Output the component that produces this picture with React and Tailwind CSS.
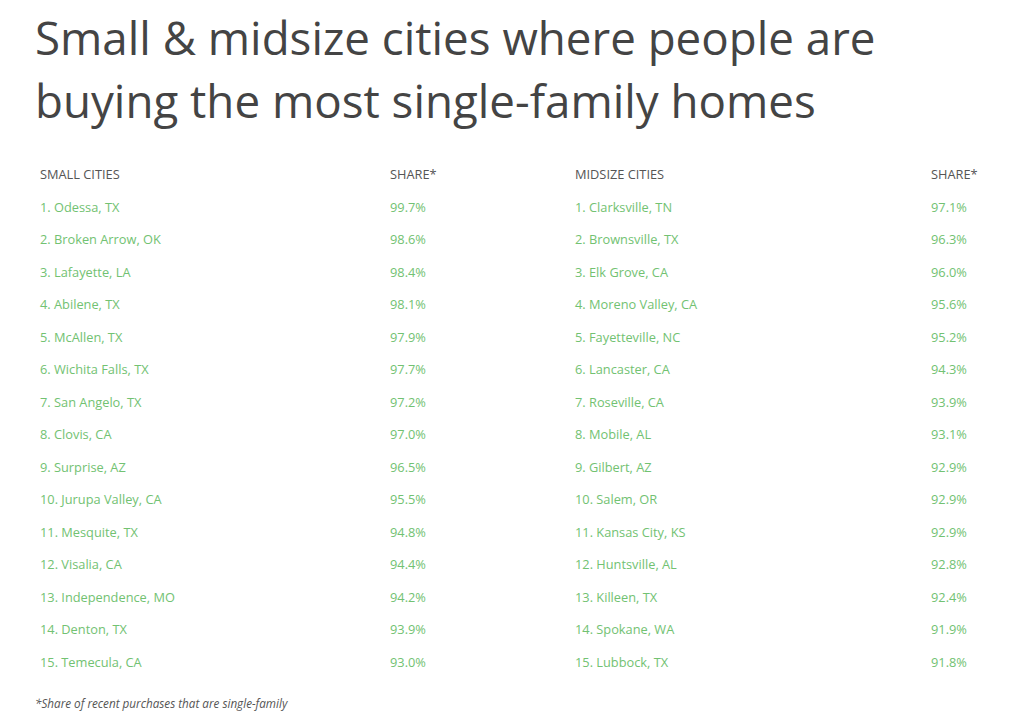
import React from 'react';

const small = [
  ['1. Odessa, TX', '99.7%'],
  ['2. Broken Arrow, OK', '98.6%'],
  ['3. Lafayette, LA', '98.4%'],
  ['4. Abilene, TX', '98.1%'],
  ['5. McAllen, TX', '97.9%'],
  ['6. Wichita Falls, TX', '97.7%'],
  ['7. San Angelo, TX', '97.2%'],
  ['8. Clovis, CA', '97.0%'],
  ['9. Surprise, AZ', '96.5%'],
  ['10. Jurupa Valley, CA', '95.5%'],
  ['11. Mesquite, TX', '94.8%'],
  ['12. Visalia, CA', '94.4%'],
  ['13. Independence, MO', '94.2%'],
  ['14. Denton, TX', '93.9%'],
  ['15. Temecula, CA', '93.0%'],
];

const midsize = [
  ['1. Clarksville, TN', '97.1%'],
  ['2. Brownsville, TX', '96.3%'],
  ['3. Elk Grove, CA', '96.0%'],
  ['4. Moreno Valley, CA', '95.6%'],
  ['5. Fayetteville, NC', '95.2%'],
  ['6. Lancaster, CA', '94.3%'],
  ['7. Roseville, CA', '93.9%'],
  ['8. Mobile, AL', '93.1%'],
  ['9. Gilbert, AZ', '92.9%'],
  ['10. Salem, OR', '92.9%'],
  ['11. Kansas City, KS', '92.9%'],
  ['12. Huntsville, AL', '92.8%'],
  ['13. Killeen, TX', '92.4%'],
  ['14. Spokane, WA', '91.9%'],
  ['15. Lubbock, TX', '91.8%'],
];

function CityTable({ label, rows, cols }) {
  return (
    <div className={`grid ${cols} text-[12.8px]`}>
      <div className="h-[33px] flex items-center text-[#555]">{label}</div>
      <div className="h-[33px] flex items-center text-[#555]">SHARE*</div>
      {rows.map(([city, share]) => (
        <React.Fragment key={city}>
          <div className="h-[32.5px] flex items-center text-[#72c272]">{city}</div>
          <div className="h-[32.5px] flex items-center text-[#72c272]">{share}</div>
        </React.Fragment>
      ))}
    </div>
  );
}

export default function App() {
  return (
    <div className="w-[1024px] h-[715px] bg-white overflow-hidden pl-[35px]" style={{ fontFamily: '"Open Sans", sans-serif' }}>
      <h1 className="text-[45.7px] leading-[63px] text-[#444] pt-[6px]">
        Small &amp; midsize cities where people are<br />buying the most single-family homes
      </h1>
      <div className="flex mt-[26px] pl-[5px]">
        <div className="w-[535px]">
          <CityTable label="SMALL CITIES" rows={small} cols="grid-cols-[350px_1fr]" />
        </div>
        <div className="w-[420px]">
          <CityTable label="MIDSIZE CITIES" rows={midsize} cols="grid-cols-[356px_1fr]" />
        </div>
      </div>
      <p className="mt-[16px] text-[11.7px] italic text-[#555]">*Share of recent purchases that are single-family</p>
    </div>
  );
}
